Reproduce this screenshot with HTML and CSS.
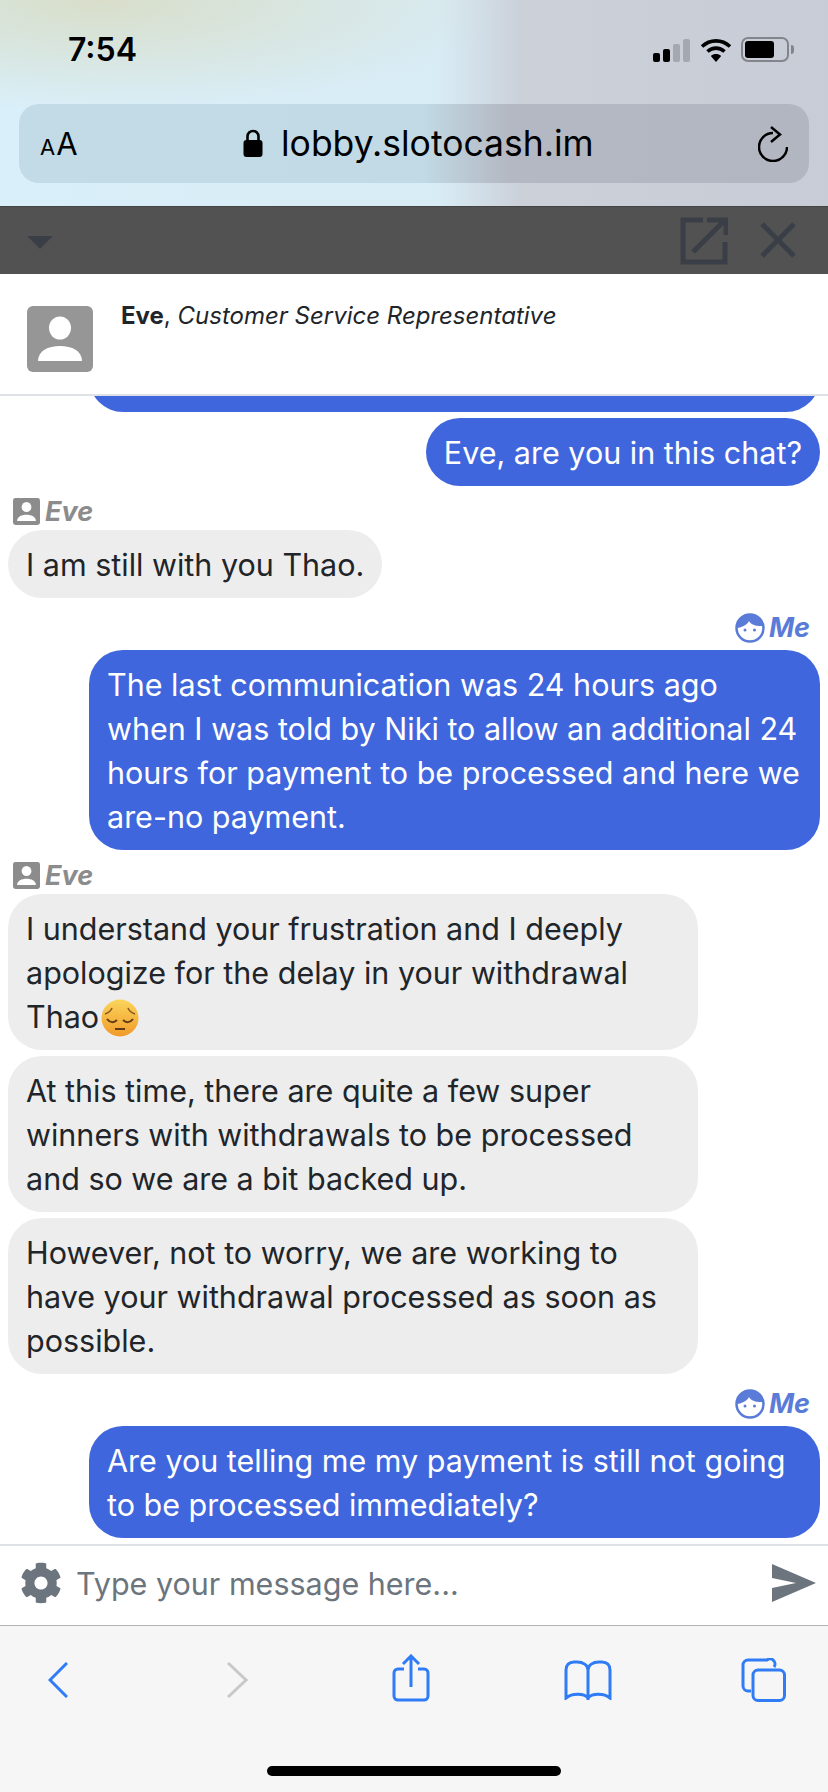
FILE: index.html
```html
<!DOCTYPE html>
<html lang="en">
<head>
    <meta charset="UTF-8">
    <meta name="viewport" content="width=device-width, initial-scale=1.0">
    <title>Chat</title>
    <link rel="stylesheet" href="styles.css">
</head>
<body>
    <!-- Safari top -->
    <div class="browser-top">
        <div class="status-bar">
            <span class="time">7:54</span>
            <div class="status-icons">
                <div class="signal">
                    <span class="bar bar-1"></span>
                    <span class="bar bar-2"></span>
                    <span class="bar bar-3"></span>
                    <span class="bar bar-4"></span>
                </div>
                <svg class="wifi" viewBox="0 0 32 24" width="32" height="24">
                    <path d="M2 8.5C10 1 22 1 30 8.5" fill="none" stroke="#000" stroke-width="3.6"/>
                    <path d="M7.5 13.5C12.5 9 19.5 9 24.5 13.5" fill="none" stroke="#000" stroke-width="3.6"/>
                    <path d="M10.8 18L16 24L21.2 18C18 15.4 14 15.4 10.8 18Z" fill="#000"/>
                </svg>
                <div class="battery"><span class="battery-level"></span></div>
                <span class="battery-tip"></span>
            </div>
        </div>
        <div class="url-bar">
            <span class="aa"><small>A</small>A</span>
            <div class="url">
                <svg class="lock" viewBox="0 0 20 28" width="20" height="28">
                    <path d="M4.5 12V7.5C4.5 4 7 2 10 2s5.500 2 5.500 5.500V12" fill="none" stroke="#000" stroke-width="2.600"/>
                    <rect x="0.500" y="11" width="19" height="17" rx="3" fill="#000"/>
                </svg>
                <span>lobby.slotocash.im</span>
            </div>
            <svg class="reload" viewBox="0 0 30 36" width="30" height="36">
                <path d="M15 7A14 14 0 1 0 29 21" fill="none" stroke="#000" stroke-width="2.500"/>
                <path d="M13 1L22 8.500L13 16" fill="none" stroke="#000" stroke-width="2.500"/>
            </svg>
        </div>
    </div>

    <!-- dimmed widget bar -->
    <div class="widget-bar">
        <span class="caret"></span>
        <svg class="popout" viewBox="0 0 48 48" width="48" height="48">
            <path d="M23 3H3V45H45V25" fill="none" stroke="#3a3f47" stroke-width="5"/>
            <path d="M13 35L44 4M27 3H46V18" fill="none" stroke="#3a3f47" stroke-width="5"/>
        </svg>
        <svg class="close" viewBox="0 0 36 36" width="36" height="36">
            <path d="M2 2L34 34M34 2L2 34" fill="none" stroke="#3a3f47" stroke-width="5"/>
        </svg>
    </div>

    <div class="agent-header">
        <svg class="agent-avatar" viewBox="0 0 66 66" width="66" height="66">
            <rect width="66" height="66" rx="6" fill="#969696"/>
            <ellipse cx="33" cy="22" rx="11" ry="11.500" fill="#fff"/>
            <path d="M11 55C11 45 21 40 33 40S55 45 55 55Z" fill="#fff"/>
        </svg>
        <p class="agent-name"><b>Eve</b>, <i>Customer Service Representative</i></p>
    </div>

    <div class="chat">
        <div class="bubble mine old-bubble"></div>
        <div class="bubble mine first">Eve, are you in this chat?</div>

        <div class="sender">
            <svg viewBox="0 0 66 66" width="27" height="27">
                <rect width="66" height="66" rx="6" fill="#8c8c8c"/>
                <ellipse cx="33" cy="22" rx="12" ry="12.500" fill="#fff"/>
                <path d="M10 56C10 46 21 41 33 41S56 46 56 56Z" fill="#fff"/>
            </svg>
            <span>Eve</span>
        </div>
        <div class="bubble theirs">I am still with you Thao.</div>

        <div class="sender sender-me">
            <svg viewBox="0 0 30 30" width="30" height="30">
                <circle cx="15" cy="15" r="13.500" fill="#fff" stroke="#5a7bd8" stroke-width="2.500"/>
                <path d="M2 15A13 13 0 0 1 28 13C22 13.500 16 12 14 8C12 12 7 14.500 2 15Z" fill="#5a7bd8"/>
                <circle cx="10" cy="17" r="1.500" fill="#5a7bd8"/>
                <circle cx="19.500" cy="17" r="1.500" fill="#5a7bd8"/>
            </svg>
            <span>Me</span>
        </div>
        <div class="bubble mine">The last communication was 24 hours ago when I was told by Niki to allow an additional 24 hours for payment to be processed and here we are-no payment.</div>

        <div class="sender">
            <svg viewBox="0 0 66 66" width="27" height="27">
                <rect width="66" height="66" rx="6" fill="#8c8c8c"/>
                <ellipse cx="33" cy="22" rx="12" ry="12.500" fill="#fff"/>
                <path d="M10 56C10 46 21 41 33 41S56 46 56 56Z" fill="#fff"/>
            </svg>
            <span>Eve</span>
        </div>
        <div class="bubble theirs wide">I understand your frustration and I deeply apologize for the delay in your withdrawal Thao<svg class="emoji" viewBox="0 0 38 38" width="38" height="38">
                <defs>
                    <linearGradient id="face" x1="0" y1="0" x2="0" y2="1">
                        <stop offset="0" stop-color="#fbd55c"/>
                        <stop offset="1" stop-color="#f09a2a"/>
                    </linearGradient>
                </defs>
                <circle cx="19" cy="19" r="18.500" fill="url(#face)"/>
                <path d="M4 15C7 14 10 12 11 9M34 15C31 14 28 12 27 9" fill="none" stroke="#8a5a1c" stroke-width="1.500"/>
                <path d="M6 20C9 24 13 24 16 21M22 21C25 24 29 24 32 20" fill="none" stroke="#5e3b12" stroke-width="2"/>
                <path d="M14 30H24" fill="none" stroke="#5e3b12" stroke-width="2"/>
            </svg></div>
        <div class="bubble theirs wide near">At this time, there are quite a few super winners with withdrawals to be processed and so we are a bit backed up.</div>
        <div class="bubble theirs wide near">However, not to worry, we are working to have your withdrawal processed as soon as possible.</div>

        <div class="sender sender-me">
            <svg viewBox="0 0 30 30" width="30" height="30">
                <circle cx="15" cy="15" r="13.500" fill="#fff" stroke="#5a7bd8" stroke-width="2.500"/>
                <path d="M2 15A13 13 0 0 1 28 13C22 13.500 16 12 14 8C12 12 7 14.500 2 15Z" fill="#5a7bd8"/>
                <circle cx="10" cy="17" r="1.500" fill="#5a7bd8"/>
                <circle cx="19.500" cy="17" r="1.500" fill="#5a7bd8"/>
            </svg>
            <span>Me</span>
        </div>
        <div class="bubble mine">Are you telling me my payment is still not going to be processed immediately?</div>
    </div>

    <div class="composer">
        <svg class="gear" viewBox="0 0 512 512" width="42" height="42">
            <path fill="#6c757d" d="M487.400 315.700l-42.600-24.600c4.300-23.200 4.300-47 0-70.200l42.600-24.600c4.900-2.800 7.100-8.600 5.500-14-11.100-35.600-30-67.800-54.700-94.600-3.800-4.100-10-5.100-14.800-2.300L380.800 110c-17.900-15.400-38.500-27.300-60.800-35.100V25.800c0-5.600-3.900-10.500-9.400-11.700-36.700-8.200-74.300-7.800-109.200 0-5.500 1.200-9.400 6.100-9.400 11.700V75c-22.200 7.900-42.800 19.800-60.800 35.100L88.700 85.500c-4.900-2.800-11-1.900-14.800 2.300-24.700 26.700-43.600 58.900-54.700 94.600-1.700 5.400.6 11.200 5.500 14L67.300 221c-4.300 23.200-4.300 47 0 70.200l-42.600 24.600c-4.900 2.800-7.100 8.600-5.500 14 11.100 35.600 30 67.800 54.700 94.600 3.800 4.100 10 5.100 14.800 2.300l42.600-24.600c17.900 15.400 38.500 27.300 60.800 35.100v49.200c0 5.600 3.900 10.500 9.400 11.700 36.700 8.200 74.300 7.800 109.200 0 5.500-1.200 9.400-6.100 9.400-11.700v-49.200c22.200-7.900 42.800-19.800 60.800-35.100l42.600 24.600c4.900 2.800 11 1.900 14.800-2.300 24.700-26.700 43.600-58.900 54.700-94.600 1.500-5.500-.7-11.300-5.600-14.100zM256 336c-44.100 0-80-35.900-80-80s35.900-80 80-80 80 35.900 80 80-35.900 80-80 80z"/>
        </svg>
        <span class="placeholder">Type your message here...</span>
        <svg class="send" viewBox="0 0 44 38" width="44" height="38">
            <path d="M0 0L44 19L0 38V24L24 19L0 14Z" fill="#6c757d"/>
        </svg>
    </div>

    <!-- Safari bottom -->
    <div class="toolbar">
        <div class="tool-row">
            <svg class="tool-back" viewBox="0 0 20 36" width="20" height="36">
                <path d="M19 1L2 18L19 35" fill="none" stroke="#2f7cf6" stroke-width="3"/>
            </svg>
            <svg class="tool-forward" viewBox="0 0 21 36" width="21" height="36">
                <path d="M1 1L19 18L1 35" fill="none" stroke="#c9c9c9" stroke-width="3"/>
            </svg>
            <svg class="tool-share" viewBox="0 0 38 48" width="38" height="48">
                <path d="M12 15H6A4 4 0 0 0 2 19V42A4 4 0 0 0 6 46H32A4 4 0 0 0 36 42V19A4 4 0 0 0 32 15H26" fill="none" stroke="#2f7cf6" stroke-width="3"/>
                <path d="M19 2V33M11 10L19 2L27 10" fill="none" stroke="#2f7cf6" stroke-width="3"/>
            </svg>
            <svg class="tool-book" viewBox="0 0 48 40" width="48" height="40">
                <path d="M24 38C20 33 8 33 2 38V10C2 5 5 2 10 2H13C19 2 24 5 24 10ZM24 38C28 33 40 33 46 38V10C46 5 43 2 38 2H35C29 2 24 5 24 10Z" fill="none" stroke="#2f7cf6" stroke-width="3"/>
            </svg>
            <svg class="tool-tabs" viewBox="0 0 45 44" width="45" height="44">
                <path d="M10 33H7A5 5 0 0 1 2 28V7A5 5 0 0 1 7 2H26A5 5 0 0 1 33 9" fill="none" stroke="#2f7cf6" stroke-width="3"/>
                <rect x="12" y="12" width="31.500" height="30.500" rx="5" fill="none" stroke="#2f7cf6" stroke-width="3"/>
            </svg>
        </div>
        <span class="home-bar"></span>
    </div>
</body>
</html>
```

FILE: styles.css
```css
html, body {
    height: 100%;
    margin: 0;
}

body {
    display: flex;
    flex-direction: column;
    width: 828px;
    height: 1792px;
    overflow: hidden;
    background-color: #fff;
    font-family: "Inter", "Liberation Sans", sans-serif;
    color: #212529;
}

svg {
    display: block;
    flex: none;
}

/* Safari top */
.browser-top {
    height: 206px;
    box-sizing: border-box;
    padding: 0 19px;
    background:
        radial-gradient(ellipse 400px 110px at 100px 0, rgba(216, 220, 196, 0.9), rgba(222, 224, 218, 0) 100%),
        linear-gradient(90deg, #d9eff9 0, #d8ecf5 53%, #cbd0d9 63%, #c8ccd6 100%);
}

.status-bar {
    height: 104px;
    box-sizing: border-box;
    padding: 30px 19px 0 49px;
    display: flex;
    justify-content: space-between;
    align-items: flex-start;
}

.time {
    font-size: 32px;
    line-height: 40px;
    font-weight: 600;
    color: #000;
}

.status-icons {
    display: flex;
    align-items: flex-end;
    margin: 7px -4px 0 0;
    height: 25px;
}

.signal {
    display: flex;
    align-items: flex-end;
    gap: 3px;
    margin-right: 10px;
    height: 24px;
}

.bar {
    width: 7px;
    border-radius: 2px;
    background-color: #000;
}

.bar-1 { height: 9px; }
.bar-2 { height: 13px; }
.bar-3 { height: 18px; background-color: #a4a9b1; }
.bar-4 { height: 23px; background-color: #a4a9b1; }

.wifi {
    margin-right: 9px;
}

.battery {
    width: 48px;
    height: 25px;
    box-sizing: border-box;
    padding: 2px;
    border: 2px solid #82868c;
    border-radius: 7px;
}

.battery-level {
    display: block;
    width: 29px;
    height: 17px;
    border-radius: 3px;
    background-color: #000;
}

.battery-tip {
    width: 3px;
    height: 9px;
    margin: 0 0 8px 2px;
    border-radius: 0 3px 3px 0;
    background-color: #82868c;
}

.url-bar {
    height: 79px;
    box-sizing: border-box;
    padding: 0 21px 0 21px;
    display: flex;
    align-items: center;
    border-radius: 20px;
    background:
        linear-gradient(90deg, #c2dbe6 0, #c1dae5 51%, #b4b8c2 62%, #b2b6c0 100%);
}

.aa {
    font-size: 31px;
    color: #000;
    width: 203px;
    letter-spacing: 1px;
}

.aa small {
    font-size: 22px;
}

.url {
    display: flex;
    align-items: center;
    gap: 18px;
    flex: 1;
    font-size: 35.5px;
    color: #000;
}

.lock {
    margin-top: -2px;
}

/* dimmed widget bar */
.widget-bar {
    height: 68px;
    box-sizing: border-box;
    padding: 10px 32px 0 27px;
    display: flex;
    align-items: flex-start;
    background-color: #525252;
    border-top: 1px solid #444;
}

.caret {
    width: 0;
    height: 0;
    margin-top: 19px;
    border-left: 13px solid transparent;
    border-right: 13px solid transparent;
    border-top: 13px solid #3a3f47;
}

.popout {
    margin-left: auto;
}

.close {
    margin: 5px 0 0 32px;
}

.agent-header {
    height: 122px;
    box-sizing: border-box;
    padding: 32px 27px 0;
    display: flex;
    gap: 28px;
    border-bottom: 2px solid #dee2e6;
}

.agent-name {
    margin: 0;
    font-size: 24px;
    line-height: 20px;
}

.agent-name b {
    font-weight: 700;
}

/* messages */
.chat {
    flex: 1;
    min-height: 0;
    overflow: hidden;
    display: flex;
    flex-direction: column;
    justify-content: flex-end;
    padding: 0 8px 6px;
}

.bubble {
    flex: none;
    box-sizing: border-box;
    padding: 13px 18px 11px;
    border-radius: 34px;
    font-size: 30.5px;
    line-height: 44px;
}

.mine {
    align-self: flex-end;
    max-width: 731px;
    background-color: #4066dd;
    color: #fff;
}

.old-bubble {
    width: 731px;
    height: 112px;
}

.first {
    margin-top: 6px;
}

.theirs {
    align-self: flex-start;
    background-color: #ededed;
}

.wide {
    width: 690px;
}

.near {
    margin-top: 6px;
}

.emoji {
    display: inline-block;
    vertical-align: -9px;
    margin-left: 2px;
}

.sender {
    flex: none;
    display: flex;
    align-items: center;
    gap: 5px;
    height: 31px;
    margin: 10px 0 3px 5px;
    font-size: 27px;
    font-weight: 700;
    font-style: italic;
    color: #8c8c8c;
}

.sender-me {
    align-self: flex-end;
    gap: 4px;
    margin: 14px 10px 7px 0;
    color: #5a7bd8;
}

/* input */
.composer {
    height: 82px;
    box-sizing: border-box;
    padding: 0 12px 5px 20px;
    display: flex;
    align-items: center;
    border-top: 2px solid #dee2e6;
    border-bottom: 1px solid #b2b2b2;
}

.placeholder {
    margin-left: 14px;
    font-size: 30.5px;
    color: #6c757d;
}

.send {
    margin-left: auto;
}

/* Safari bottom */
.toolbar {
    height: 166px;
    box-sizing: border-box;
    padding-top: 28px;
    display: flex;
    flex-direction: column;
    background-color: #f6f6f6;
}

.tool-row {
    display: flex;
    align-items: flex-start;
    padding-left: 48px;
}

.tool-back { margin-top: 8px; }
.tool-forward { margin: 8px 0 0 159px; }
.tool-share { margin-left: 144px; }
.tool-book { margin: 6px 0 0 134px; }
.tool-tabs { margin: 4px 0 0 129px; }

.home-bar {
    width: 294px;
    height: 10px;
    margin: 64px auto 0;
    border-radius: 5px;
    background-color: #000;
}
```
